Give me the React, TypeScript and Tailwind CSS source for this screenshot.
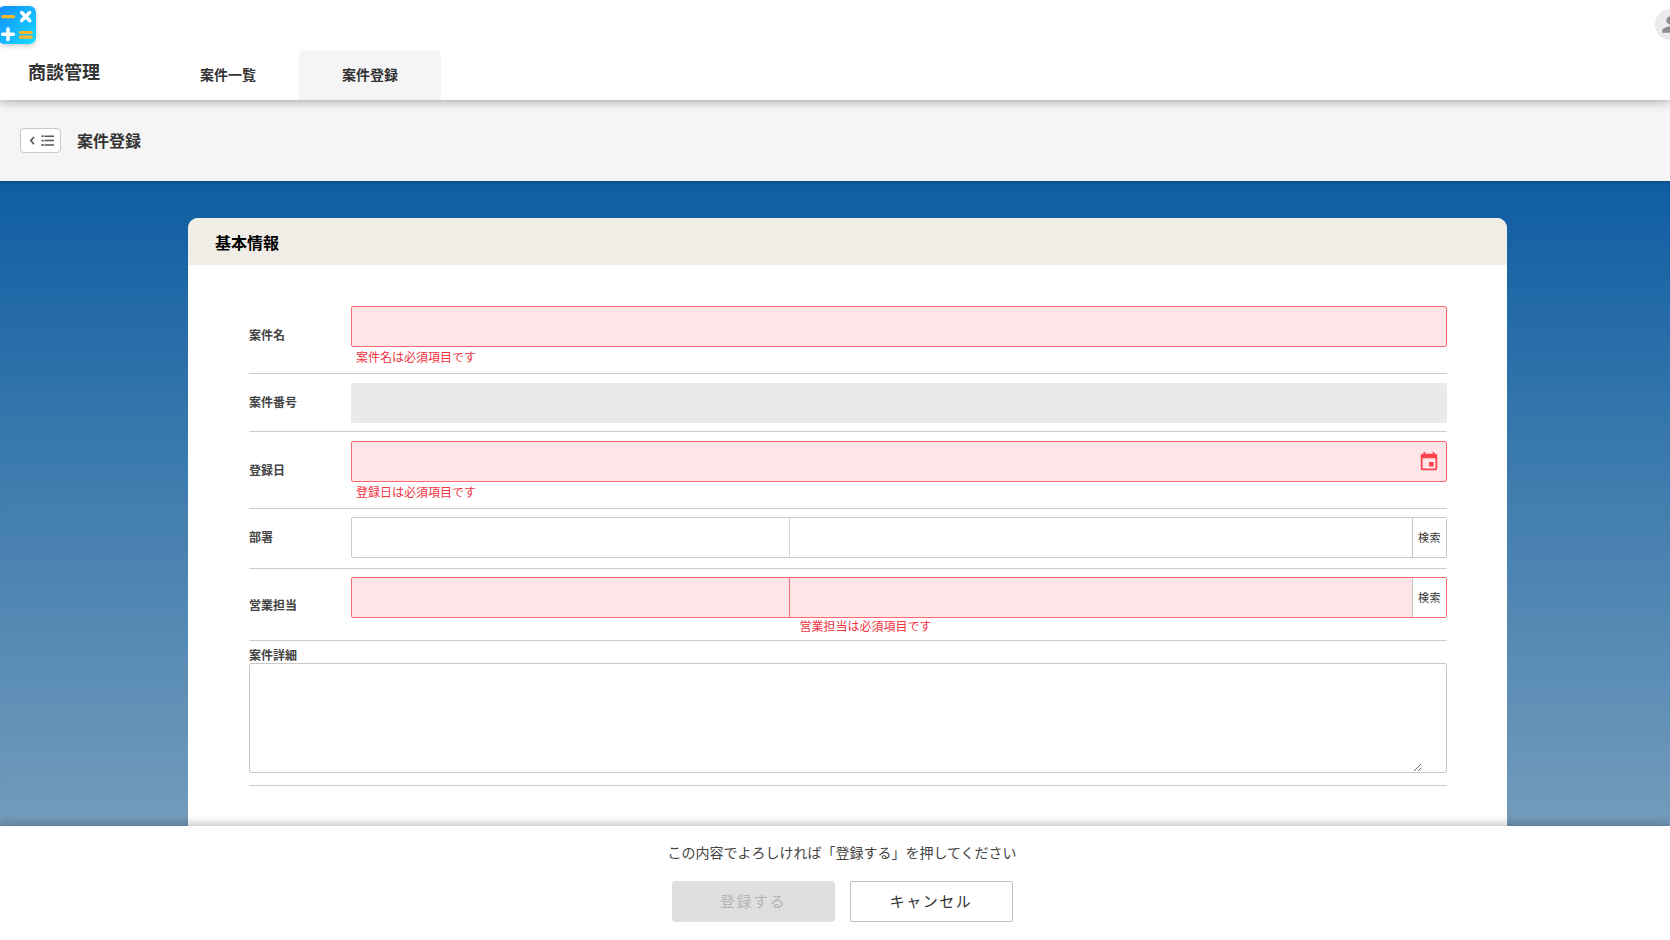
import { useId, useState } from "react";
import type { ReactNode } from "react";
import { MdEvent, MdPerson } from "react-icons/md";

const tabs = [
  { label: "案件一覧", href: "#list", active: false },
  { label: "案件登録", href: "#create", active: true },
];

const normalBox = "border-[#c9c9c9] bg-white";
const errorBox = "border-[#fb6a6f] bg-[#ffe5e8]";

const AppLogo = () => (
  <svg
    viewBox="0 0 38 38"
    className="-ml-0.5 size-[38px] shrink-0 rounded-md shadow-[0_2px_5px_rgba(0,0,0,0.2)]"
    aria-label="商談管理アプリ"
  >
    <defs>
      <linearGradient id="logo" x1="0" y1="0" x2="1" y2="1">
        <stop offset="0" stopColor="#118bff" />
        <stop offset="1" stopColor="#17dcff" />
      </linearGradient>
    </defs>
    <rect width="38" height="38" rx="6" fill="url(#logo)" />
    <g strokeWidth="3.2" strokeLinecap="round">
      <path d="M4.7 10.6H15.6M22.6 26.5H33.2M22.6 31.2H33.2" stroke="#f8b62d" />
      <path
        d="M23.7 6.6L31.6 14.6M31.6 6.6L23.7 14.6M4.7 28.3H15.3M10 23V33.4"
        stroke="#fff"
        strokeWidth="3.6"
      />
    </g>
  </svg>
);

const BackToList = () => (
  <button
    type="button"
    aria-label="一覧に戻る"
    className="flex h-[25px] w-[41px] items-center justify-center rounded border border-[#c8c8c8] bg-white"
  >
    <svg viewBox="0 0 27 13" className="h-[13px] w-[27px]" fill="none" stroke="#555">
      <path d="M7 3L3.8 6.6L7 10.2" strokeWidth="1.6" />
      <path d="M14.6 2.2H16.6M14.6 6.6H16.6M14.6 11H16.6" strokeWidth="1.8" />
      <path d="M17.4 2.2H27M17.4 6.6H27M17.4 11H27" strokeWidth="1.5" />
    </svg>
  </button>
);

const Row = ({
  id,
  label,
  className,
  children,
}: {
  id: string;
  label: string;
  className: string;
  children: ReactNode;
}) => (
  <div className={`flex items-center border-b border-[#cbcbcb] ${className}`}>
    <label htmlFor={id} className="w-[102px] shrink-0 pb-0.5 text-xs font-bold text-[#444]">
      {label}
    </label>
    <div className="min-w-0 flex-1">{children}</div>
  </div>
);

const ErrorText = ({ children }: { children: ReactNode }) => (
  <p className="text-xs text-[#f0323f]">{children}</p>
);

const TextRow = ({
  label,
  error,
  disabled,
  date,
}: {
  label: string;
  error?: string;
  disabled?: boolean;
  date?: boolean;
}) => {
  const id = useId();
  const [value, setValue] = useState("");

  return (
    <Row id={id} label={label} className="pt-[9px] pb-2">
      {disabled ? (
        <input id={id} disabled className="block h-10 w-full rounded-xs bg-[#eaeaea] px-2 text-sm" />
      ) : (
        <div className={`flex h-[41px] items-center rounded-xs border ${error ? errorBox : normalBox}`}>
          <input
            id={id}
            value={value}
            onChange={(e) => setValue(e.target.value)}
            className="h-full min-w-0 flex-1 bg-transparent px-2 text-sm outline-none"
          />
          {date && (
            <button type="button" aria-label="日付を選択" className="mr-1.5">
              <MdEvent className="size-[22px] text-[#ff444b]" />
            </button>
          )}
        </div>
      )}
      {error && (
        <div className="h-[18px] px-[5px] pt-0.5">
          <ErrorText>{error}</ErrorText>
        </div>
      )}
    </Row>
  );
};

const LookupRow = ({ label, error }: { label: string; error?: string }) => {
  const id = useId();
  const [code, setCode] = useState("");

  return (
    <Row id={id} label={label} className={error ? "pt-2 pb-1.5" : "pt-2 pb-2.5"}>
      <div className={`flex h-[41px] rounded-xs border ${error ? errorBox : normalBox}`}>
        <input
          id={id}
          value={code}
          onChange={(e) => setCode(e.target.value)}
          className={`w-2/5 border-r bg-transparent px-2 text-sm outline-none ${
            error ? "border-[#ee7377]" : "border-[#d6d6d6]"
          }`}
        />
        <input
          aria-label={`${label}名`}
          readOnly
          className="min-w-0 flex-1 bg-transparent px-2 text-sm outline-none"
        />
        <button
          type="button"
          className="w-[34px] shrink-0 border-l border-[#c4c4c4] bg-white text-[11px] tracking-wider text-[#333]"
        >
          検索
        </button>
      </div>
      {error && (
        <div className="ml-[40%] pl-2.5">
          <ErrorText>{error}</ErrorText>
        </div>
      )}
    </Row>
  );
};

const App = () => {
  const [detail, setDetail] = useState("");

  return (
    <div
      lang="ja"
      className="flex min-h-screen flex-col overflow-x-hidden bg-white font-['Noto_Sans_CJK_JP',sans-serif] text-[#333]"
    >
      {/* Header */}
      <header className="relative z-10 bg-white shadow-[0_1px_10px_rgba(0,0,0,0.35)]">
        <div className="flex h-[51px] items-start justify-between overflow-hidden pt-1.5">
          <AppLogo />
          <button
            type="button"
            aria-label="アカウント"
            className="mt-[3px] -mr-4 flex size-[31px] shrink-0 items-center justify-center rounded-full bg-[#ebebeb]"
          >
            <MdPerson className="size-[25px] text-[#8e8e8e]" />
          </button>
        </div>
        <div className="flex h-[49px]">
          <div className="flex w-[157px] items-center pb-2.5 pl-7 text-lg font-bold text-[#333]">
            商談管理
          </div>
          <nav className="flex">
            {tabs.map((tab) => (
              <a
                key={tab.label}
                href={tab.href}
                className={`flex w-[142px] items-center justify-center rounded-t pb-1 text-sm font-bold text-[#333] ${
                  tab.active ? "bg-[#f5f5f5]" : ""
                }`}
              >
                {tab.label}
              </a>
            ))}
          </nav>
        </div>
      </header>

      {/* Page title */}
      <div className="flex h-[81px] items-center gap-4 bg-[#f5f5f5] pl-5">
        <BackToList />
        <h1 className="pb-0.5 text-base font-bold text-[#333]">案件登録</h1>
      </div>

      {/* Form */}
      <main className="flex flex-1 flex-col bg-linear-to-b/srgb from-[#0f5da3] via-[#3d7bae] via-45% to-[#739bbb] pt-[37px] pr-[163px] pl-[188px] shadow-[inset_0_4px_4px_-4px_rgba(0,0,0,0.4)]">
        <section className="flex-1 rounded-t-[10px] bg-white">
          <h2 className="flex h-[47px] items-center rounded-t-[10px] bg-[#f0ede6] pl-[27px] text-base font-bold text-black">
            基本情報
          </h2>
          <form className="pt-8 pr-[60px] pl-[61px]">
            <TextRow label="案件名" error="案件名は必須項目です" />
            <TextRow label="案件番号" disabled />
            <TextRow label="登録日" error="登録日は必須項目です" date />
            <LookupRow label="部署" />
            <LookupRow label="営業担当" error="営業担当は必須項目です" />
            <div className="border-b border-[#cbcbcb] pt-1.5 pb-3">
              <label htmlFor="detail" className="block text-xs font-bold text-[#444]">
                案件詳細
              </label>
              <div className="rounded-xs border border-[#c9c9c9] pr-6">
                <textarea
                  id="detail"
                  value={detail}
                  onChange={(e) => setDetail(e.target.value)}
                  className="block h-[108px] w-full resize px-2 py-1 text-sm outline-none"
                />
              </div>
            </div>
          </form>
        </section>
      </main>

      {/* Footer actions */}
      <footer className="sticky bottom-0 z-10 flex h-[114px] flex-col items-center bg-white pt-4 pl-3.5 shadow-[0_-1px_10px_rgba(0,0,0,0.3)]">
        <p className="text-sm text-[#444]">この内容でよろしければ「登録する」を押してください</p>
        <div className="mt-[19px] flex gap-[15px]">
          <button
            type="button"
            disabled
            className="h-[41px] w-[163px] rounded-sm bg-[#dfdfdf] text-[15px] tracking-widest text-[#b5b5b5]"
          >
            登録する
          </button>
          <button
            type="button"
            className="h-[41px] w-[163px] rounded-xs border border-[#bfbfbf] bg-white text-[15px] tracking-widest text-[#333]"
          >
            キャンセル
          </button>
        </div>
      </footer>
    </div>
  );
};

export default App;
